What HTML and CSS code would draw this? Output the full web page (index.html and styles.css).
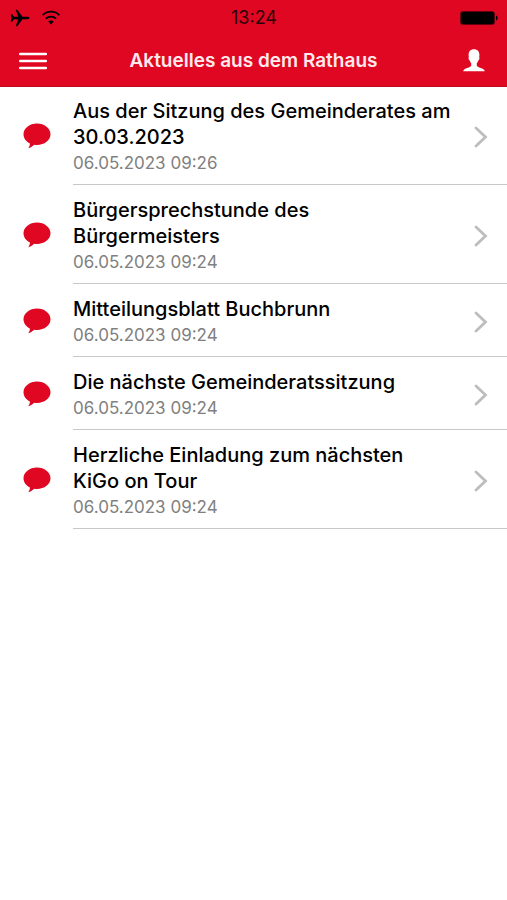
FILE: index.html
```html
<!DOCTYPE html>
<html lang="de">
<head>
<meta charset="utf-8">
<meta name="viewport" content="width=device-width, initial-scale=1">
<title>Aktuelles aus dem Rathaus</title>
<link rel="stylesheet" href="styles.css">
</head>
<body>
<svg class="defs" aria-hidden="true">
  <symbol id="bubble" viewBox="0 0 28 26"><path d="M14 .5C21.400.5 27.500 5.300 27.500 11.300S21.400 22 14 22c-1 0-2-.1-2.900-.2C9.300 23.600 7.300 24.800 5.300 25.200c1.100-1.300 1.600-2.800 1.600-4.600C3.100 18.700.5 15.300.5 11.300.5 5.300 6.600.5 14 .5Z" fill="currentColor"/></symbol>
  <symbol id="chevron" viewBox="0 0 14 22"><path d="M2 2l9.500 9L2 20" fill="none" stroke="currentColor" stroke-width="2.800" stroke-linecap="round" stroke-linejoin="miter"/></symbol>
</svg>
<header class="top">
  <div class="status">
    <div class="signals">
      <svg class="plane" viewBox="0 0 20 18"><path d="M19.500 9c0 .8-1.200 1.200-2.300 1.200h-4.700L7.300 17.300H5.700l2.500-7.100H4.100L2.100 12.700H.8L1.300 9 .8 5.300h1.300l2 2.500h4.100L5.700.7h1.600l5.200 7.100h4.700c1.100 0 2.300.4 2.300 1.200Z"/></svg>
      <svg class="wifi" viewBox="0 0 20 15"><path d="M1.700 5.200C6 .4 14 .4 18.300 5.200M4.900 8.700c2.900-2.900 7.300-2.900 10.200 0" fill="none" stroke="#000" stroke-width="1.800"/><path d="M10 14.500l-2.800-3c1.500-1.500 4.100-1.500 5.600 0Z"/></svg>
    </div>
    <time class="clock">13:24</time>
    <svg class="battery" viewBox="0 0 38 14"><rect x=".5" y=".5" width="34" height="13" rx="2.500" fill="#000" stroke="#62000d"/><path d="M36 4.500c2.200.8 2.200 4.200 0 5Z"/></svg>
  </div>
  <nav class="bar">
    <button class="icon-button" aria-label="Menü"><svg class="menu" viewBox="0 0 30 18"><path d="M2.200 2h25.600M2.200 9h25.600M2.200 16h25.600" stroke="#fff" stroke-width="2.500" stroke-linecap="round"/></svg></button>
    <h1 class="heading">Aktuelles aus dem Rathaus</h1>
    <button class="icon-button" aria-label="Profil"><svg class="person" viewBox="0 0 22 23"><path d="M11 .3c3.300 0 5.400 2.100 5.400 5.500 0 1.100-.1 1.900-.3 2.500.8.5.3 2.600-.7 2.900-.4 1.400-1 2.400-1.600 3v2.600c0 1.600 7.800 2.400 8 5.500H.2c.2-3.100 8-3.900 8-5.500v-2.600c-.6-.6-1.200-1.600-1.600-3-1-.3-1.500-2.400-.7-2.900-.2-.6-.3-1.400-.3-2.500C5.600 2.400 7.700.3 11 .3Z" fill="#fff"/></svg></button>
  </nav>
</header>
<main>
  <ul class="news">
    <li><a class="item" href="#"><svg class="bubble"><use href="#bubble"/></svg><span class="body"><span class="text"><span class="title">Aus der Sitzung des Gemeinderates am 30.03.2023</span><time class="date">06.05.2023 09:26</time></span><svg class="chevron"><use href="#chevron"/></svg></span></a></li>
    <li><a class="item" href="#"><svg class="bubble"><use href="#bubble"/></svg><span class="body"><span class="text"><span class="title">Bürgersprechstunde des<br>Bürgermeisters</span><time class="date">06.05.2023 09:24</time></span><svg class="chevron"><use href="#chevron"/></svg></span></a></li>
    <li><a class="item" href="#"><svg class="bubble"><use href="#bubble"/></svg><span class="body"><span class="text"><span class="title">Mitteilungsblatt Buchbrunn</span><time class="date">06.05.2023 09:24</time></span><svg class="chevron"><use href="#chevron"/></svg></span></a></li>
    <li><a class="item" href="#"><svg class="bubble"><use href="#bubble"/></svg><span class="body"><span class="text"><span class="title">Die nächste Gemeinderatssitzung</span><time class="date">06.05.2023 09:24</time></span><svg class="chevron"><use href="#chevron"/></svg></span></a></li>
    <li><a class="item" href="#"><svg class="bubble"><use href="#bubble"/></svg><span class="body"><span class="text"><span class="title">Herzliche Einladung zum nächsten<br>KiGo on Tour</span><time class="date">06.05.2023 09:24</time></span><svg class="chevron"><use href="#chevron"/></svg></span></a></li>
  </ul>
</main>
</body>
</html>
```
FILE: styles.css
```css
* { box-sizing: border-box; }
body {
  margin: 0;
  background: #fff;
  color: #000;
  font-family: Inter, "Liberation Sans", sans-serif;
}
svg { display: block; flex: none; }
.defs { position: absolute; width: 0; height: 0; }

.top {
  background: #e00722;
  border-bottom: 1px solid #c00a20;
}
.status {
  display: grid;
  grid-template-columns: 1fr auto 1fr;
  align-items: center;
  height: 35px;
  padding: 0 9px 0 10px;
}
.signals { display: flex; align-items: center; gap: 11px; }
.plane { width: 20px; height: 18px; }
.wifi { width: 20px; height: 15px; }
.clock { font-size: 18px; line-height: 24px; color: #26020a; }
.battery { width: 38px; height: 14px; justify-self: end; }

.bar {
  display: flex;
  align-items: center;
  justify-content: space-between;
  height: 51px;
  padding: 0 18px;
}
.icon-button {
  display: flex;
  justify-content: center;
  width: 30px;
  padding: 0;
  border: 0;
  background: none;
}
.menu { width: 30px; height: 18px; }
.person { width: 22px; height: 23px; }
.heading {
  margin: 0;
  font-size: 19px;
  line-height: 26px;
  font-weight: 600;
  color: #ffe9ec;
}

.news { margin: 0; padding: 0; list-style: none; }
.item {
  display: flex;
  align-items: center;
  padding-left: 23px;
  gap: 22px;
  color: inherit;
  text-decoration: none;
}
.bubble { width: 28px; height: 26px; color: #e00722; }
.body {
  flex: 1;
  display: flex;
  align-items: center;
  gap: 12px;
  padding: 12px 19px 8px 0;
  border-bottom: 1px solid #c8c8c8;
}
.news li:first-child .body { padding-top: 11px; }
.text { flex: 1; }
.title { display: block; font-size: 20px; line-height: 26px; font-weight: 500; }
.date { display: block; font-size: 17px; line-height: 26px; color: #808080; }
.chevron { width: 14px; height: 22px; color: #bdbdbd; }
```
